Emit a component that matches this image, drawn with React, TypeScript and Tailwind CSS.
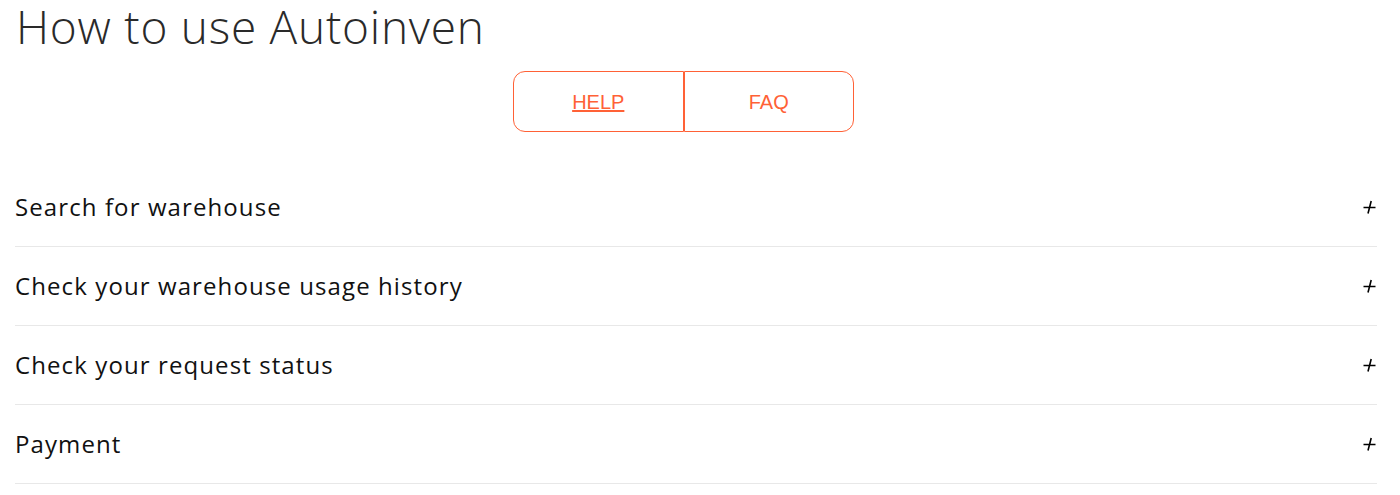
const items = [
  "Search for warehouse",
  "Check your warehouse usage history",
  "Check your request status",
  "Payment",
]

function Plus() {
  return (
    <svg width="13" height="14" viewBox="0 0 13 14" className="mr-[1px] -mt-[1px] text-black">
      <path d="M0.5 7.5H12.5M8.2 1L5 13.5" stroke="currentColor" strokeWidth="1.6" fill="none" />
    </svg>
  )
}

export default function App() {
  return (
    <div className="min-h-screen bg-white font-['Open_Sans',sans-serif]">
      <h1 className="pl-4 text-[46px] font-light leading-[52px] tracking-[0.75px] text-[#2a2a2a]">
        How to use Autoinven
      </h1>
      <div className="ml-[513px] mt-[19px] flex h-[61px] w-[341px] font-['Liberation_Sans',Arial,sans-serif] text-[20px] text-[#ff6136]">
        <a href="#" className="flex flex-1 items-center justify-center rounded-l-[12px] border border-[#ff6136] underline">
          HELP
        </a>
        <a href="#" className="flex flex-1 items-center justify-center rounded-r-[12px] border border-[#ff6136]">
          FAQ
        </a>
      </div>
      <div className="ml-[15px] mr-[23px] mt-[36px]">
        {items.map((t) => (
          <div key={t} className="flex h-[79px] items-center justify-between border-b border-[#e8e8e8]">
            <span className="text-[24px] tracking-[1.1px] text-[#111]">{t}</span>
            <Plus />
          </div>
        ))}
      </div>
    </div>
  )
}
